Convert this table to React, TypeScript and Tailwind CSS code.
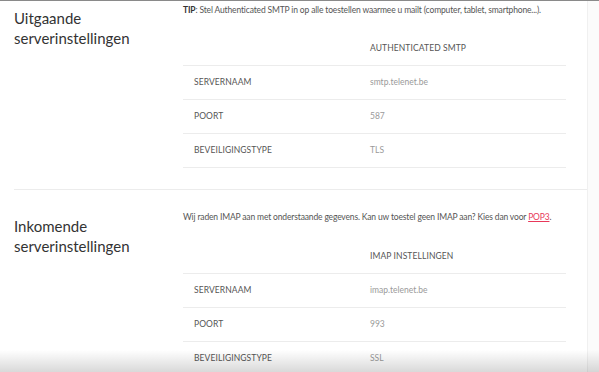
export default function App() {
  const smtp = [
    { label: 'SERVERNAAM', value: 'smtp.telenet.be' },
    { label: 'POORT', value: '587' },
    { label: 'BEVEILIGINGSTYPE', value: 'TLS' },
  ]
  const imap = [
    { label: 'SERVERNAAM', value: 'imap.telenet.be' },
    { label: 'POORT', value: '993' },
    { label: 'BEVEILIGINGSTYPE', value: 'SSL' },
  ]

  const Table = ({ title, rows }: { title: string; rows: { label: string; value: string }[] }) => (
    <div className="text-[8.5px]">
      <div className="flex h-[35px] items-center border-b border-[#ececec]">
        <div className="w-[187px]" />
        <div className="tracking-[0.1px] text-[#555]">{title}</div>
      </div>
      {rows.map(r => (
        <div key={r.label} className="flex h-[34px] items-center border-b border-[#ececec]">
          <div className="w-[187px] pl-[11px] tracking-[0.1px] text-[#555]">{r.label}</div>
          <div className="text-[#9a9a9a]">{r.value}</div>
        </div>
      ))}
    </div>
  )

  return (
    <div className="relative h-[372px] overflow-hidden bg-white font-['Lato',sans-serif]">
      <div className="flex h-full border-t border-[#8a8a8a]">
        <div className="w-[587px] pl-[14px]">
          <section className="flex border-b border-[#ececec] pb-[21px]">
            <h2 className="mt-[7px] w-[169px] text-[15px] leading-[20px] text-[#333]">
              Uitgaande<br />serverinstellingen
            </h2>
            <div className="w-[383px]">
              <p className="mt-[3px] whitespace-nowrap text-[8.5px] leading-[12px] tracking-[-0.15px] text-[#555]">
                <b className="text-[#333]">TIP</b>: Stel Authenticated SMTP in op alle toestellen waarmee u mailt (computer, tablet, smartphone...).
              </p>
              <div className="mt-[15px]">
                <Table title="AUTHENTICATED SMTP" rows={smtp} />
              </div>
            </div>
          </section>
          <section className="flex">
            <h2 className="mt-[26px] w-[169px] text-[15px] leading-[20px] text-[#333]">
              Inkomende<br />serverinstellingen
            </h2>
            <div className="w-[383px]">
              <p className="mt-[21px] whitespace-nowrap text-[8.5px] leading-[12px] tracking-[-0.15px] text-[#555]">
                Wij raden IMAP aan met onderstaande gegevens. Kan uw toestel geen IMAP aan? Kies dan voor{' '}
                <a href="#" className="text-[#e8385a] underline">POP3</a>.
              </p>
              <div className="mt-[16px]">
                <Table title="IMAP INSTELLINGEN" rows={imap} />
              </div>
            </div>
          </section>
        </div>
        <div className="flex-1 border-l border-[#f0f0f0] bg-[#fbfbfb]" />
      </div>
      <div className="pointer-events-none absolute bottom-0 left-0 right-0 h-[22px] bg-gradient-to-b from-transparent to-black/15" />
    </div>
  )
}
